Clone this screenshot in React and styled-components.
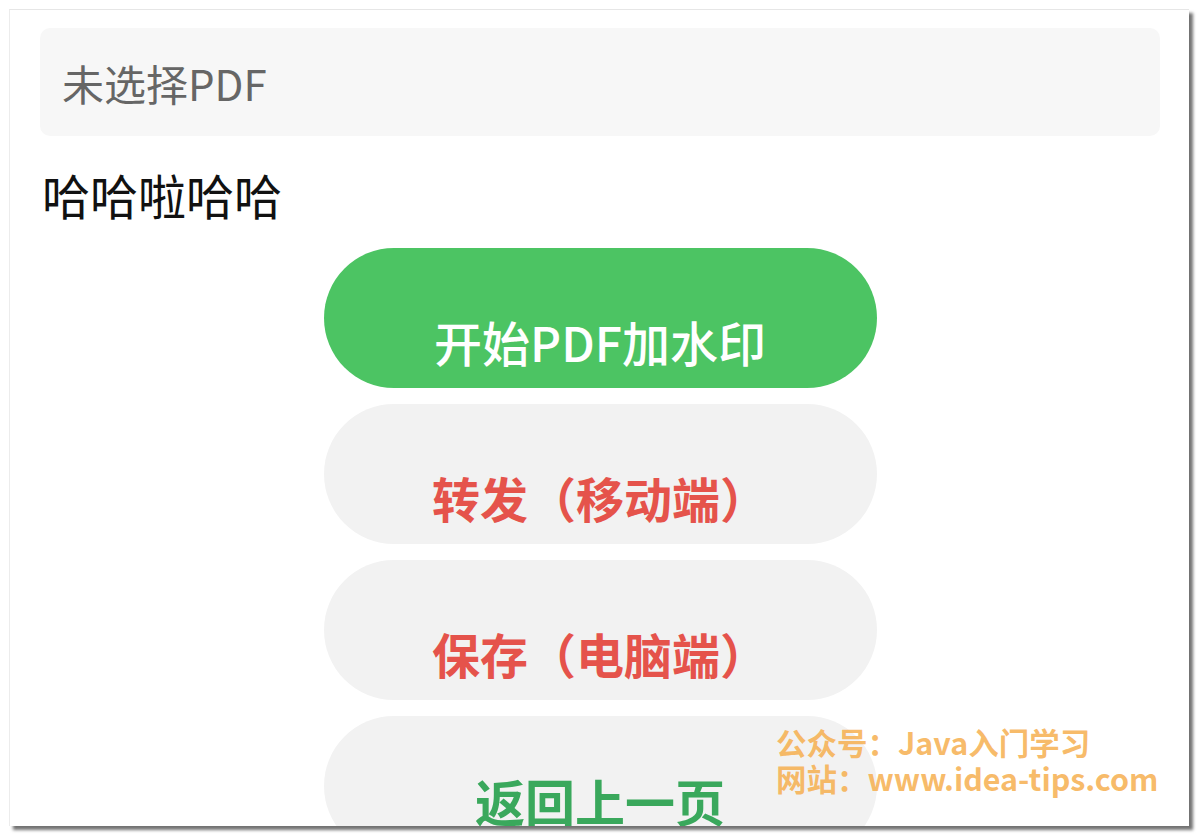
import React from "react";
import styled, { createGlobalStyle } from "styled-components";

const Global = createGlobalStyle`
  html, body { margin: 0; padding: 0; background: #ffffff; }
  body { font-family: "Noto Sans CJK SC", "Noto Sans", sans-serif; }
`;

const Page = styled.div`
  width: 1200px;
  height: 837px;
  padding: 9px 0 0 9px;
  box-sizing: border-box;
  overflow: hidden;
`;

const Card = styled.div`
  position: relative;
  width: 1180px;
  height: 817px;
  box-sizing: border-box;
  background: #ffffff;
  border-top: 1px solid #e6e6e6;
  border-left: 1px solid #ececec;
  box-shadow: 4px 4px 3px rgba(0, 0, 0, 0.55);
  padding: 18px 29px 0 30px;
  overflow: hidden;
  display: flex;
  flex-direction: column;
  & > * { flex-shrink: 0; }
`;

const FileField = styled.div`
  height: 108px;
  background: #f7f7f7;
  border-radius: 10px;
  display: flex;
  align-items: center;
  padding-left: 22px;
  font-size: 42px;
  color: #666666;
`;

const Title = styled.div`
  margin-top: 30px;
  padding-left: 2px;
  font-size: 48px;
  line-height: 56px;
  color: #111111;
`;

const Actions = styled.div`
  margin-top: 26px;
  display: flex;
  flex-direction: column;
  align-items: center;
  gap: 16px;
`;

const palette = {
  primary: { bg: "#4cc463", fg: "#ffffff", weight: 500, size: 48, drop: 46 },
  danger: { bg: "#f2f2f2", fg: "#e5534b", weight: 700, size: 48, drop: 46 },
  back: { bg: "#f2f2f2", fg: "#3aa85c", weight: 700, size: 50, drop: 28 },
};

const PillButton = styled.button`
  flex: none;
  width: 553px;
  height: 140px;
  border: none;
  border-radius: 70px;
  background: ${(p) => palette[p.$kind].bg};
  color: ${(p) => palette[p.$kind].fg};
  font-family: "Noto Sans CJK SC", "Noto Sans", sans-serif;
  font-weight: ${(p) => palette[p.$kind].weight};
  font-size: ${(p) => palette[p.$kind].size}px;
  padding: ${(p) => palette[p.$kind].drop}px 0 0;
  display: flex;
  align-items: center;
  justify-content: center;
  cursor: pointer;
`;

const Watermark = styled.div`
  position: absolute;
  left: 766px;
  top: 714px;
  font-family: "Noto Sans CJK SC", "Noto Sans", sans-serif;
  font-weight: 700;
  font-size: 30.5px;
  line-height: 36px;
  color: rgba(246, 172, 72, 0.82);
  pointer-events: none;
`;

export default function App() {
  return (
    <>
      <Global />
      <Page>
        <Card>
          <FileField>未选择PDF</FileField>
          <Title>哈哈啦哈哈</Title>
          <Actions>
            <PillButton $kind="primary">开始PDF加水印</PillButton>
            <PillButton $kind="danger">转发（移动端）</PillButton>
            <PillButton $kind="danger">保存（电脑端）</PillButton>
            <PillButton $kind="back">返回上一页</PillButton>
          </Actions>
          <Watermark>
            <div>公众号：Java入门学习</div>
            <div>网站：www.idea-tips.com</div>
          </Watermark>
        </Card>
      </Page>
    </>
  );
}
